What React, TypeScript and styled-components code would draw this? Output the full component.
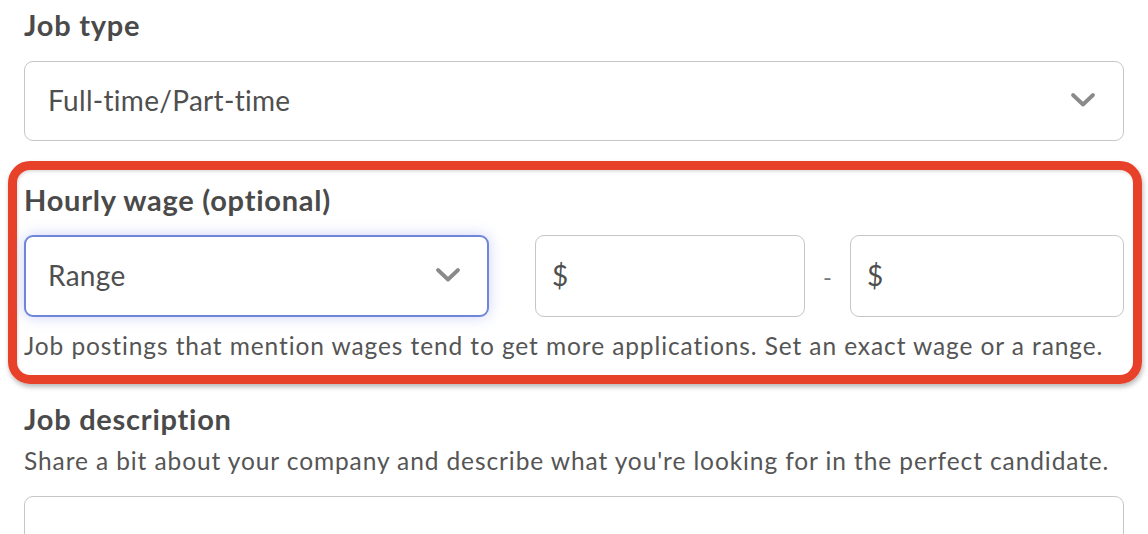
import React from "react";
import styled, { createGlobalStyle } from "styled-components";

const Global = createGlobalStyle`
  html, body { margin: 0; padding: 0; background: #ffffff; }
  body { font-family: "Lato", "Open Sans", Arial, sans-serif; color: #4d4d4d; }
  * { box-sizing: border-box; }
`;

const Page = styled.div`
  width: 1148px;
  height: 534px;
  padding: 9px 24px 0 24px;
  display: flex;
  flex-direction: column;
  overflow: hidden;
`;

const Label = styled.div`
  font-size: 29px;
  font-weight: 700;
  letter-spacing: 0.75px;
  color: #4a4a4a;
  line-height: 32px;
`;

const Help = styled.div`
  font-size: 24.5px;
  letter-spacing: 0.9px;
  color: #555555;
  line-height: 28px;
  white-space: nowrap;
`;

const SelectBox = styled.div<{ $focused?: boolean }>`
  height: ${(p) => (p.$focused ? "82px" : "80px")};
  border: ${(p) => (p.$focused ? "2px solid #6f86db" : "1.5px solid #c6c6c6")};
  border-radius: 9px;
  display: flex;
  align-items: center;
  justify-content: space-between;
  padding: 0 ${(p) => (p.$focused ? "26px" : "27px")} 2px ${(p) => (p.$focused ? "22px" : "23px")};
  font-size: 28px;
  letter-spacing: 0.3px;
  color: #4f4f4f;
  background: #fff;
  box-shadow: ${(p) => (p.$focused ? "0 0 14px rgba(110, 130, 230, 0.35)" : "none")};
`;

const Field = styled.div`
  display: flex;
  flex-direction: column;
  gap: 20px;
`;

const Highlight = styled.div`
  margin: 20px -18px 0 -16px;
  border: 9px solid #e8412a;
  border-radius: 22px;
  padding: 14px 9px 15px 7px;
  box-shadow: 1px 3px 5px rgba(0, 0, 0, 0.28), inset 1px 2px 3px rgba(0, 0, 0, 0.12);
  display: flex;
  flex-direction: column;
`;

const WageRow = styled.div`
  display: grid;
  grid-template-columns: 465px 316px 1fr;
  align-items: center;
  margin-top: 19px;
`;

const MoneyGroup = styled.div<{ $lead: number }>`
  display: grid;
  grid-template-columns: ${(p) => p.$lead}px 1fr;
  align-items: center;
`;

const MoneyInput = styled.div`
  height: 82px;
  border: 1.5px solid #c6c6c6;
  border-radius: 9px;
  display: flex;
  align-items: center;
  padding: 0 0 2px 16px;
  font-size: 28px;
  color: #4f4f4f;
`;

const Dash = styled.span`
  text-align: center;
  font-size: 24px;
  color: #777;
`;

const Note = styled(Help)`
  margin-top: 15px;
`;

const DescSection = styled.div`
  margin-top: 19px;
  display: flex;
  flex-direction: column;
`;

const DescHelp = styled(Help)`
  margin-top: 12px;
`;

const TextArea = styled.div`
  margin-top: 21px;
  height: 80px;
  border: 1.5px solid #c6c6c6;
  border-radius: 9px;
`;

const Chevron = () => (
  <svg width="26" height="16" viewBox="0 0 26 16" fill="none">
    <path d="M3 3 L13 12.5 L23 3" stroke="#8a8a8a" strokeWidth="3.8" strokeLinecap="round" strokeLinejoin="round" />
  </svg>
);

export default function App() {
  return (
    <>
      <Global />
      <Page>
        <Field>
          <Label>Job type</Label>
          <SelectBox>
            <span>Full-time/Part-time</span>
            <Chevron />
          </SelectBox>
        </Field>
        <Highlight>
          <Label>Hourly wage (optional)</Label>
          <WageRow>
            <SelectBox $focused>
              <span>Range</span>
              <Chevron />
            </SelectBox>
            <MoneyGroup $lead={46}>
              <span />
              <MoneyInput>$</MoneyInput>
            </MoneyGroup>
            <MoneyGroup $lead={45}>
              <Dash>-</Dash>
              <MoneyInput>$</MoneyInput>
            </MoneyGroup>
          </WageRow>
          <Note>Job postings that mention wages tend to get more applications. Set an exact wage or a range.</Note>
        </Highlight>
        <DescSection>
          <Label>Job description</Label>
          <DescHelp>Share a bit about your company and describe what you're looking for in the perfect candidate.</DescHelp>
          <TextArea />
        </DescSection>
      </Page>
    </>
  );
}
